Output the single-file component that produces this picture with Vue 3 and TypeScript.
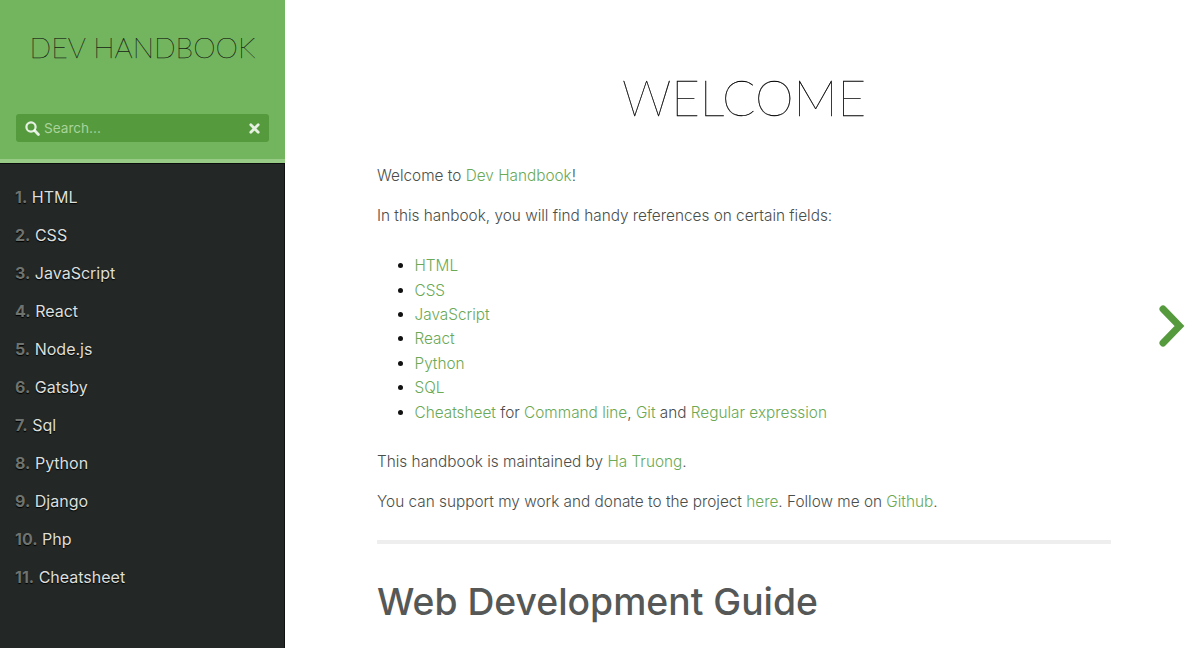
<script setup lang="ts">
const nav = ['HTML', 'CSS', 'JavaScript', 'React', 'Node.js', 'Gatsby', 'Sql', 'Python', 'Django', 'Php', 'Cheatsheet']
</script>

<template>
  <div class="page">
    <aside class="sidebar">
      <header class="brand">
        <div class="logo">DEV HANDBOOK</div>
        <div class="search">
          <svg class="mag" width="15" height="15" viewBox="0 0 15 15"><circle cx="6" cy="6" r="4.6" fill="none" stroke="#fff" stroke-opacity=".85" stroke-width="2.2"/><path d="M9.6 9.6L13.4 13.4" stroke="#fff" stroke-opacity=".85" stroke-width="2.8" stroke-linecap="round"/></svg>
          <span class="placeholder">Search...</span>
          <svg class="clear" width="11" height="11" viewBox="0 0 11 11"><path d="M1.8 1.8L9.2 9.2M9.2 1.8L1.8 9.2" stroke="#fff" stroke-opacity=".85" stroke-width="2.8" stroke-linecap="round"/></svg>
        </div>
      </header>
      <nav class="nav">
        <div v-for="(item, i) in nav" :key="item" class="nav-item"><b>{{ i + 1 }}.</b> {{ item }}</div>
      </nav>
    </aside>
    <main class="main">
      <article class="content">
        <h1>WELCOME</h1>
        <p>Welcome to <a>Dev Handbook</a>!</p>
        <p>In this hanbook, you will find handy references on certain fields:</p>
        <ul>
          <li><a>HTML</a></li>
          <li><a>CSS</a></li>
          <li><a>JavaScript</a></li>
          <li><a>React</a></li>
          <li><a>Python</a></li>
          <li><a>SQL</a></li>
          <li><a>Cheatsheet</a> for <a>Command line</a>, <a>Git</a> and <a>Regular expression</a></li>
        </ul>
        <p>This handbook is maintained by <a>Ha Truong</a>.</p>
        <p>You can support my work and donate to the project <a>here</a>. Follow me on <a>Github</a>.</p>
        <hr />
        <h2>Web Development Guide</h2>
      </article>
      <svg class="next" width="26" height="42" viewBox="0 0 26 42"><path d="M4 4L20.5 21L4 38" fill="none" stroke="#559a3d" stroke-width="7" stroke-linecap="round" stroke-linejoin="miter"/></svg>
    </main>
  </div>
</template>

<style>
body { margin: 0; overflow: hidden; }
</style>

<style scoped>
.page { display: flex; height: 648px; overflow: hidden; font-family: Inter, "Liberation Sans", sans-serif; background: #fff; }
.sidebar { width: 285px; flex: none; display: flex; flex-direction: column; background: #232826; }
.brand { height: 159px; background: #73b55e; border-bottom: 4px solid #98cb86; box-sizing: content-box; padding: 0 16px; display: flex; flex-direction: column; }
.logo { margin-top: 31px; text-align: center; font-size: 28.5px; line-height: 32px; font-weight: 100; color: #161d14; -webkit-text-stroke: 0.25px #161d14; font-family: Lato, Inter, sans-serif; white-space: nowrap; }
.search { margin-top: 51px; height: 28px; border-radius: 3px; background: #559a3d; display: flex; align-items: center; padding: 0 9px 0 9px; }
.mag { flex: none; }
.placeholder { margin-left: 4px; flex: 1; font-size: 13.6px; color: #a9d39a; }
.clear { flex: none; }
.nav { border-top: 1px solid #0b0d0c; padding-top: 14px; border-right: 1px solid #111; flex: 1; }
.nav-item { height: 38px; line-height: 38px; padding-left: 15px; font-size: 16px; color: #dcdfdc; text-shadow: 0 1px 1px #000; }
.nav-item b { color: #6f736f; font-weight: 700; }
.main { flex: 1; position: relative; }
.content { width: 734px; margin-left: 92px; color: #4a4e4b; font-size: 15.35px; line-height: 24.4px; font-weight: 300; }
h1 { margin: 65px 0 0; height: 64px; line-height: 64px; text-align: center; font-size: 49.2px; font-weight: 100; color: #000; -webkit-text-stroke: 0.3px #000; font-family: Lato, Inter, sans-serif; }
p { margin: 0 0 16px; }
.content > h1 + p { margin-top: 35px; }
a { color: #6aa955; }
ul { margin: 25.4px 0 24.6px; padding-left: 37.5px; }
ul li::marker { color: #111; }
hr { border: 0; height: 4px; background: #eeeeee; margin: 26px 0 0; }
h2 { margin: 34px 0 0; font-size: 37.3px; line-height: 48px; font-weight: 500; color: #555856; }
.next { position: absolute; right: 15px; top: 305px; }
</style>
